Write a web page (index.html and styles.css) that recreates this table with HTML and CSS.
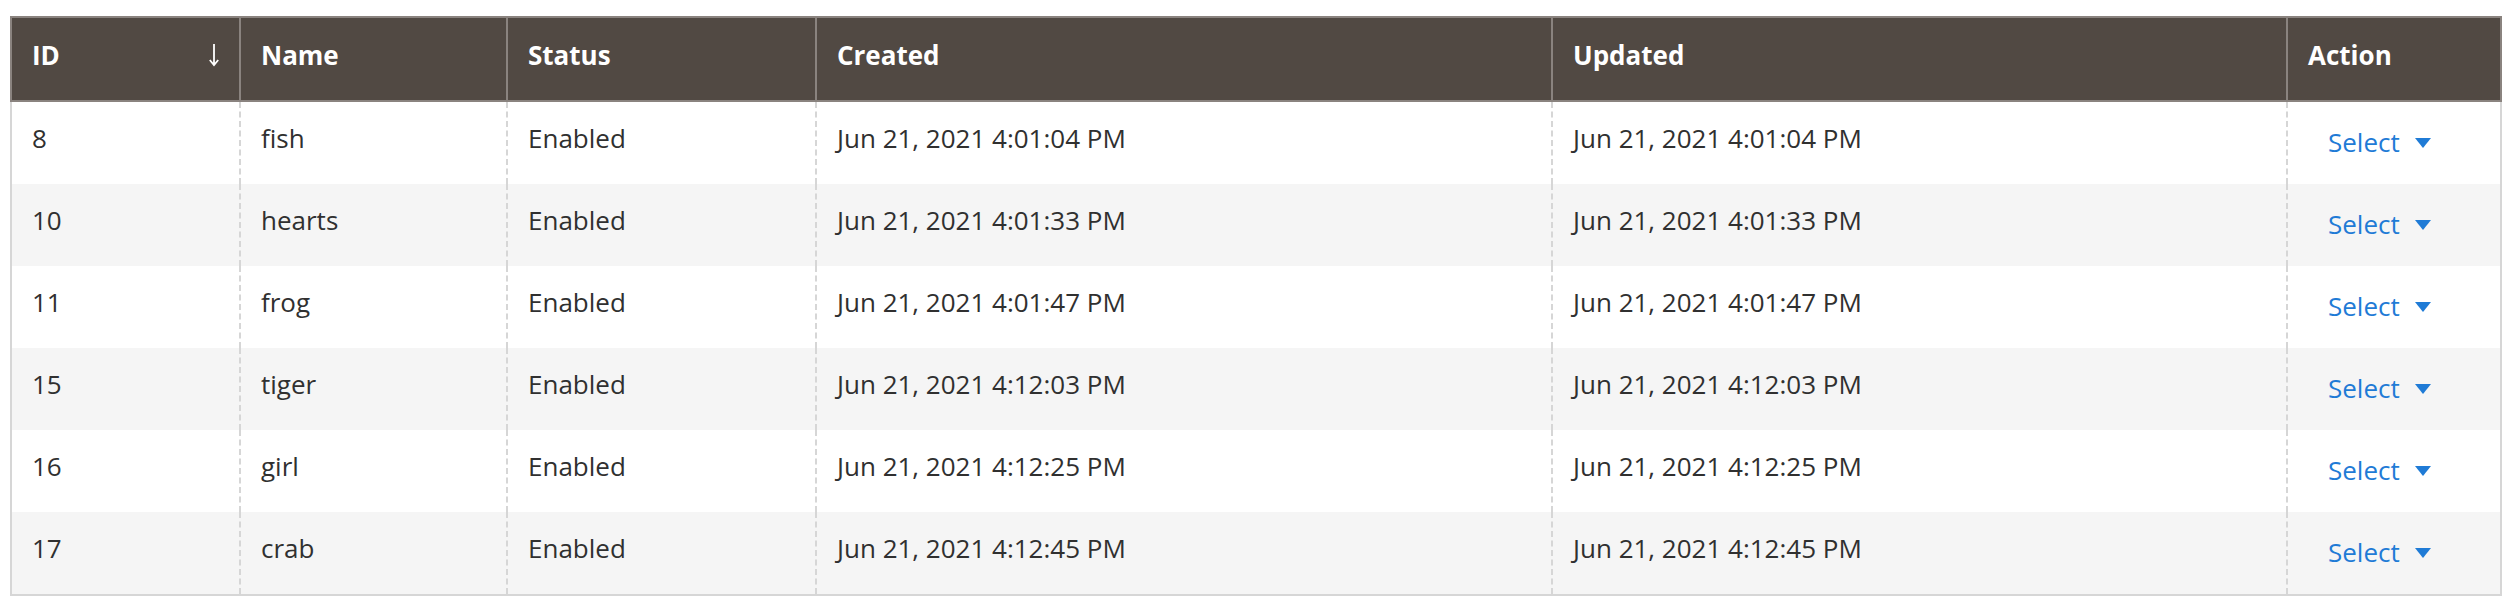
FILE: index.html
```html
<!DOCTYPE html>
<html lang="en">
<head>
<meta charset="utf-8">
<title>Grid</title>
<link rel="stylesheet" href="styles.css">
</head>
<body>
<div class="page">
  <div class="grid">
    <div class="row head">
      <div class="th th-sort"><span>ID</span>
        <svg class="sort-arrow" width="12" height="24" viewBox="0 0 12 24"><path d="M6 1 V22 M1.8 17 L6 22 L10.2 17" fill="none" stroke="#fff" stroke-width="1.8"/></svg>
      </div>
      <div class="th">Name</div>
      <div class="th">Status</div>
      <div class="th">Created</div>
      <div class="th">Updated</div>
      <div class="th">Action</div>
    </div>
    <div class="body">
      <div class="row">
        <div class="td">8</div><div class="td">fish</div><div class="td">Enabled</div>
        <div class="td">Jun 21, 2021 4:01:04 PM</div><div class="td">Jun 21, 2021 4:01:04 PM</div>
        <div class="td td-action"><span class="select">Select</span><span class="caret"></span></div>
      </div>
      <div class="row">
        <div class="td">10</div><div class="td">hearts</div><div class="td">Enabled</div>
        <div class="td">Jun 21, 2021 4:01:33 PM</div><div class="td">Jun 21, 2021 4:01:33 PM</div>
        <div class="td td-action"><span class="select">Select</span><span class="caret"></span></div>
      </div>
      <div class="row">
        <div class="td">11</div><div class="td">frog</div><div class="td">Enabled</div>
        <div class="td">Jun 21, 2021 4:01:47 PM</div><div class="td">Jun 21, 2021 4:01:47 PM</div>
        <div class="td td-action"><span class="select">Select</span><span class="caret"></span></div>
      </div>
      <div class="row">
        <div class="td">15</div><div class="td">tiger</div><div class="td">Enabled</div>
        <div class="td">Jun 21, 2021 4:12:03 PM</div><div class="td">Jun 21, 2021 4:12:03 PM</div>
        <div class="td td-action"><span class="select">Select</span><span class="caret"></span></div>
      </div>
      <div class="row">
        <div class="td">16</div><div class="td">girl</div><div class="td">Enabled</div>
        <div class="td">Jun 21, 2021 4:12:25 PM</div><div class="td">Jun 21, 2021 4:12:25 PM</div>
        <div class="td td-action"><span class="select">Select</span><span class="caret"></span></div>
      </div>
      <div class="row">
        <div class="td">17</div><div class="td">crab</div><div class="td">Enabled</div>
        <div class="td">Jun 21, 2021 4:12:45 PM</div><div class="td">Jun 21, 2021 4:12:45 PM</div>
        <div class="td td-action"><span class="select">Select</span><span class="caret"></span></div>
      </div>
    </div>
  </div>
</div>
</body>
</html>
```
FILE: styles.css
```css
* { box-sizing: border-box; }
html, body { margin: 0; padding: 0; background: #fff; }
body {
  font-family: "Open Sans", "Liberation Sans", sans-serif;
  font-size: 26px;
  line-height: 36px;
  color: #303030;
}
.page { padding: 16px 12px 0 10px; }
.grid { width: 2492px; }
.row {
  display: grid;
  grid-template-columns: 227px 267px 309px 736px 735px 214px;
}
.head {
  background: #514943;
  border: 2px solid #8a837f;
  color: #fff;
  font-weight: 700;
  height: 86px;
}
.th {
  padding: 19px 20px 0 20px;
}
.th + .th { border-left: 2px solid #8a837f; }
.th-sort {
  display: flex;
  justify-content: space-between;
  align-items: flex-start;
  padding-right: 19px;
}
.sort-arrow { margin-top: 6px; }
.body {
  border: 2px solid #d6d6d6;
  border-top: 0;
}
.body .row { height: 82px; background: #fff; }
.body .row:nth-child(even) { background: #f5f5f5; }
.td { padding: 18px 20px 0 20px; }
.td + .td { border-left: 2px dashed #d6d6d6; }
.td-action {
  padding: 22px 0 0 40px;
  display: flex;
  align-items: flex-start;
}
.select { color: #1f7bd6; }
.caret {
  width: 0;
  height: 0;
  margin: 14px 0 0 15px;
  border-left: 8px solid transparent;
  border-right: 8px solid transparent;
  border-top: 10px solid #1f7bd6;
}
```
